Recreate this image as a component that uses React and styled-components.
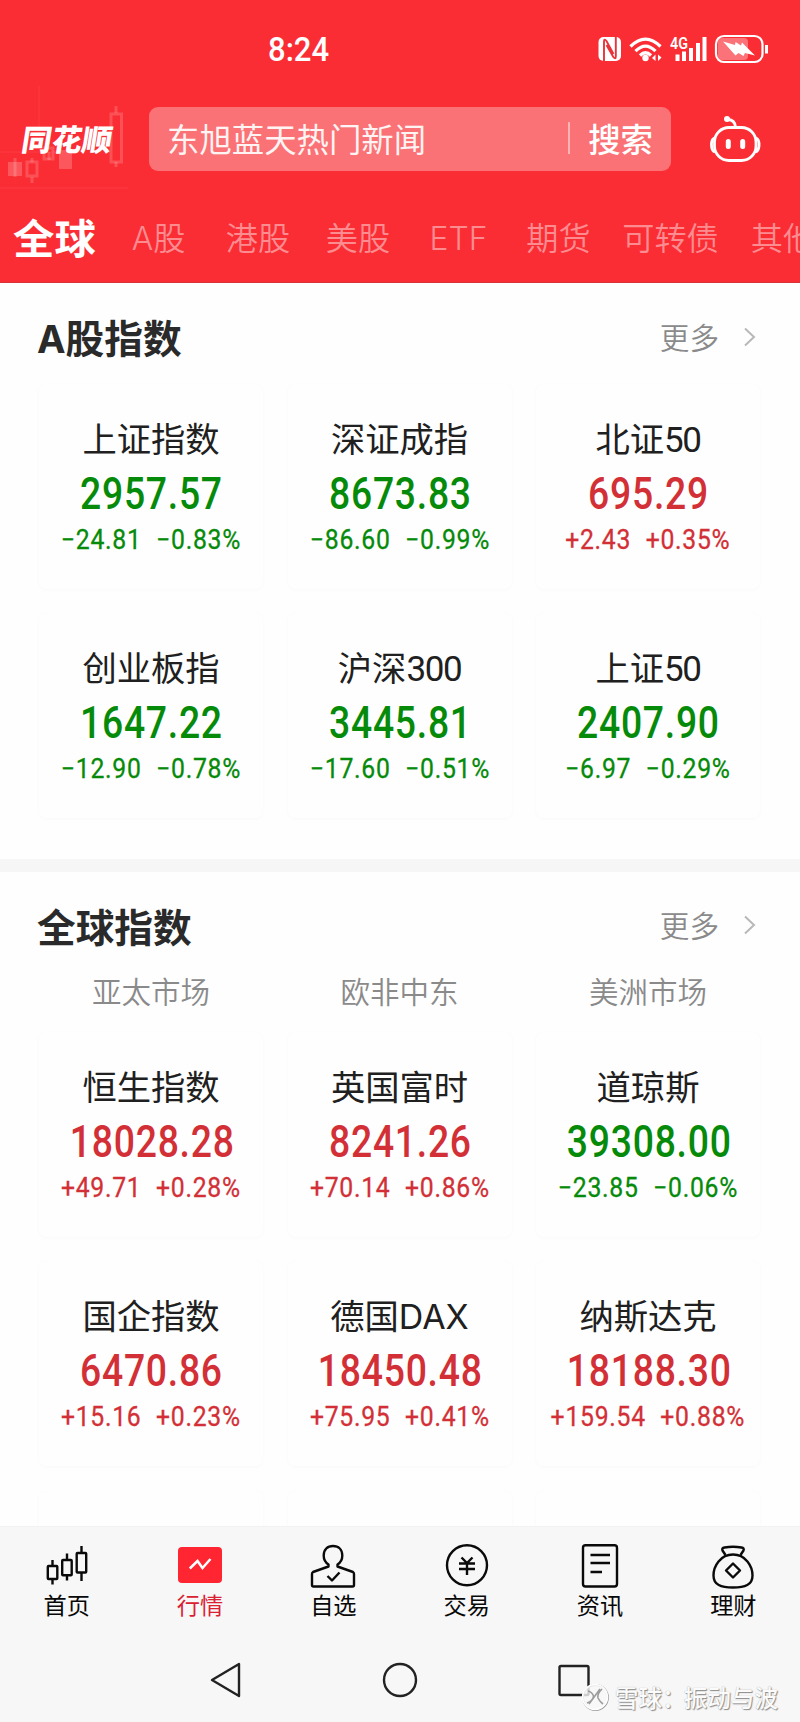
import { styled, css, createGlobalStyle } from "styled-components"

const GlobalStyle = createGlobalStyle`
  * {
    box-sizing: border-box;
  }
  body {
    margin: 0;
    background: #fdfdfd;
    font-family: "Noto Sans CJK SC", sans-serif;
  }
  svg {
    display: block;
    flex: none;
  }
`

const Screen = styled.div`
  position: relative;
  display: flex;
  flex-direction: column;
  width: 800px;
  height: 1722px;
  overflow: hidden;
  background: #fefefe;
`

const center = css`
  display: flex;
  align-items: center;
`

/* header */

const Header = styled.header`
  position: relative;
  flex: none;
  height: 283px;
  background: #fb2d34;
  border-bottom: 1px solid #d9343b;
  color: #fff;
`

const ChartDecor = styled.svg`
  position: absolute;
  left: 0;
  top: 84px;
`

const StatusBar = styled.div`
  ${center}
  height: 98px;
  padding: 0 31px 0 268px;
  justify-content: space-between;
`

const Clock = styled.span`
  display: inline-block;
  font: 500 33px/1 Roboto, sans-serif;
  transform: scaleX(0.94);
  transform-origin: left;
`

const StatusIcons = styled.div`
  ${center}
  height: 30px;
`

const SearchRow = styled.div`
  ${center}
  height: 82px;
  padding: 0 39px 0 22px;
`

const Logo = styled.div`
  width: 127px;
  padding-bottom: 3px;
  font-size: 30px;
  line-height: 1;
  font-weight: 900;
  white-space: nowrap;
  transform: skewX(-9deg);
  letter-spacing: 0.2px;
`

const SearchBox = styled.div`
  ${center}
  width: 522px;
  height: 64px;
  padding: 0 18px 2px;
  border-radius: 9px;
  background: #fa7275;
  font-size: 32.4px;
  line-height: 1;
`

const SearchHint = styled.span`
  flex: 1;
  color: #fff3f3;
`

const SearchButton = styled.span`
  padding-left: 20px;
  font-weight: 500;
  background: linear-gradient(#fbb3b5, #fbb3b5) left center / 2px 32px no-repeat;
`

const Robot = styled.svg`
  margin-left: auto;
`

const Tabs = styled.nav`
  display: flex;
  height: 102px;
  margin-top: 5px;
  overflow: hidden;
`

const Tab = styled.span`
  flex: none;
  width: ${(p) => p.$width}px;
  height: 102px;
  text-align: center;
  font-size: 32.2px;
  line-height: 102px;
  font-weight: 350;
  color: #fc8c90;
  ${(p) =>
    p.$active &&
    css`
      font-size: 41.4px;
      font-weight: 700;
      color: #fff;
    `}
`

/* index sections */

const Content = styled.main`
  flex: 1;
  min-height: 0;
  overflow: hidden;
`

const Section = styled.section`
  height: ${(p) => p.$height}px;
  padding: 0 38px 0 39px;
  border-bottom: 13px solid #f6f6f6;
`

const SectionHead = styled.div`
  ${center}
  justify-content: space-between;
  height: ${(p) => p.$height}px;
  padding: 6px 4px 0 0;
`

const Title = styled.h2`
  margin: 2px 0 0 -2px;
  font-size: 38.7px;
  line-height: 1;
  font-weight: 700;
  color: #2a2a2a;
`

const More = styled.span`
  ${center}
  gap: 23px;
  font-size: 29.6px;
  line-height: 1;
  font-weight: 350;
  color: #8a8a8a;
`

const Markets = styled.div`
  display: grid;
  grid-template-columns: repeat(3, 224px);
  column-gap: 24.5px;
  height: 61px;
  padding-bottom: 22px;
  align-items: center;
  text-align: center;
  font-size: 29.5px;
  line-height: 1;
  font-weight: 350;
  color: #8a8a8a;
`

const Grid = styled.div`
  display: grid;
  grid-template-columns: repeat(3, 224px);
  grid-auto-rows: 205px;
  gap: 24.4px 24.5px;
`

const Card = styled.div`
  display: flex;
  flex-direction: column;
  align-items: center;
  padding-top: 33px;
  border-radius: 8px;
  background: #fefefe;
  box-shadow: 0 1px 5px rgba(0, 0, 0, 0.022);
  color: ${(p) => (p.$up ? "#d23036" : "#068a0a")};
  white-space: pre;
`

const Name = styled.div`
  height: 43px;
  font-size: 34.3px;
  line-height: 41px;
  color: #202020;
`

const Digits = styled.span`
  font-family: Roboto, sans-serif;
  font-size: 35px;
  letter-spacing: -1.4px;
`

const Letters = styled.span`
  font-family: Inter, sans-serif;
  font-size: 0.99em;
`

const Value = styled.div`
  height: 66px;
  padding-left: 2px;
  font: 500 43.6px/69px Roboto, sans-serif;
  letter-spacing: 0.9px;
  transform: scaleX(0.855);
`

const Change = styled.div`
  display: flex;
  gap: 16px;
  height: 28px;
  font: 400 27.2px/28px Roboto, sans-serif;
  letter-spacing: 0.8px;
  -webkit-text-stroke: 0.3px currentColor;
  transform: scaleX(0.91);
`

/* bottom bars */

const Footer = styled.footer`
  flex: none;
  height: 196px;
  background: #f7f7f7;
  border-top: 1px solid #f2f2f2;
`

const NavBar = styled.nav`
  display: grid;
  grid-template-columns: repeat(6, 1fr);
  height: 104px;
`

const NavItem = styled.div`
  display: flex;
  flex-direction: column;
  align-items: center;
  padding-top: 17px;
  font-size: 23.2px;
  line-height: 24px;
  color: ${(p) => (p.$active ? "#da2033" : "#080808")};
`

const SystemBar = styled.div`
  ${center}
  justify-content: center;
  gap: 138px;
  height: 97px;
`

const Watermark = styled.div`
  ${center}
  position: absolute;
  right: 22px;
  bottom: 10px;
  gap: 6px;
  height: 30px;
  font-size: 23.6px;
  line-height: 30px;
  font-weight: 500;
  color: #fbfbfb;
  text-shadow: 1px 1px 1px #8b8b8b, 0 0 1px #a5a5a5;
`

const WatermarkName = styled.span`
  margin-left: -8px;
`

const tabs = [
  ["全球", 109],
  ["A股", 99],
  ["港股", 100],
  ["美股", 100],
  ["ETF", 101],
  ["期货", 99],
  ["可转债", 125],
  ["其他", 100],
]

const aShares = [
  ["上证指数", "2957.57", "−24.81", "−0.83%"],
  ["深证成指", "8673.83", "−86.60", "−0.99%"],
  ["北证50", "695.29", "+2.43", "+0.35%"],
  ["创业板指", "1647.22", "−12.90", "−0.78%"],
  ["沪深300", "3445.81", "−17.60", "−0.51%"],
  ["上证50", "2407.90", "−6.97", "−0.29%"],
]

const globalIndexes = [
  ["恒生指数", "18028.28", "+49.71", "+0.28%"],
  ["英国富时", "8241.26", "+70.14", "+0.86%"],
  ["道琼斯", "39308.00", "−23.85", "−0.06%"],
  ["国企指数", "6470.86", "+15.16", "+0.23%"],
  ["德国DAX", "18450.48", "+75.95", "+0.41%"],
  ["纳斯达克", "18188.30", "+159.54", "+0.88%"],
]

// latin letters and digits inside chinese labels get their own faces
const mixed = (text) =>
  text.split(/(\d+|[A-Z]+)/).map((part, i) => {
    if (i % 2 === 0) return part
    return /\d/.test(part) ? <Digits key={i}>{part}</Digits> : <Letters key={i}>{part}</Letters>
  })

const IndexCard = ({ item: [name, value, change, percent] }) => (
  <Card $up={change.startsWith("+")}>
    <Name>{mixed(name)}</Name>
    <Value>{value}</Value>
    <Change>
      <span>{change}</span>
      <span>{percent}</span>
    </Change>
  </Card>
)

const MoreLink = () => (
  <More>
    更多
    <svg width="16" height="22" viewBox="0 0 16 22" fill="none" stroke="#b8b8b8" strokeWidth="2">
      <path d="M3 2.500L12 11L3 19.500" />
    </svg>
  </More>
)

const StatusGlyphs = () => (
  <svg width="172" height="32" viewBox="597 33 172 32" fill="none" stroke="#fff">
    <rect x="598.500" y="37" width="22.500" height="24" rx="5" fill="#fff" stroke="none" />
    <path d="M604 61V41.500Q604 38 606.500 41L613.500 54M615.800 37V56.500Q615.800 60 613.300 57L606.500 45" stroke="#e8333a" strokeWidth="1.900" />
    <g strokeWidth="3.200">
      <path d="M630.500 46.500Q645.500 31.500 660.500 46.500" />
      <path d="M635.500 51.200Q645.500 41 655.500 51.200" />
      <path d="M640 55.500Q645.500 50 651 55.500" />
    </g>
    <circle cx="645.500" cy="58" r="3.200" fill="#fff" stroke="none" />
    <path d="M655.500 54.500V61L652 58ZM658 61V54.500L661.500 57.500Z" fill="#fff" stroke="none" />
    <path
      d="M677.500 61V54.500M684 61V51.500M691 61V48M698 61V43M704.500 61V37"
      strokeWidth="4"
    />
    <text x="670" y="49" fill="#fff" stroke="none" fontFamily="Roboto" fontSize="16.500" fontWeight="600" textLength="18" lengthAdjust="spacingAndGlyphs">
      4G
    </text>
    <rect x="718" y="38" width="30" height="22" rx="4" fill="#fb7378" stroke="none" />
    <rect x="716" y="36" width="46.500" height="26" rx="8" strokeWidth="2.200" />
    <path d="M723 41.500L735 45L735.500 42L741 45.500L742 42.500L755 55.500L745 53L743.500 56L738.500 53L735.500 55.500Z" fill="#fff" stroke="none" />
    <path d="M766.500 45V53.500" strokeWidth="3" />
  </svg>
)

const RobotIcon = () => (
  <Robot width="52" height="48" viewBox="709 114 52 48" fill="none" stroke="#fff" strokeWidth="2.800">
    <rect x="714.500" y="126.500" width="41.500" height="33" rx="14.500" />
    <path d="M714.500 137Q711 138.500 711.500 145Q712 150 715 151M756 137Q759.500 138.500 759 145Q758.500 150 755.500 151" />
    <path d="M735.500 126Q735 119 728 118.500" />
    <circle cx="727" cy="118" r="3" fill="#fff" stroke="none" />
    <path d="M728.300 140.500V145.500M742.700 140.500V145.500" strokeWidth="5" strokeLinecap="round" />
  </Robot>
)

const navProps = { width: 48, height: 48, viewBox: "0 0 48 48", fill: "none", stroke: "#0a0a0a", strokeWidth: 2.4 }

const HomeIcon = () => (
  <svg {...navProps}>
    <path d="M9.500 16V21.500M9.500 35.500V40.500M24 9.500V15.500M24 31.500V36.500M38.500 2V8.500M38.500 28.500V37" />
    <rect x="4.800" y="22" width="9.500" height="13" rx="0.800" />
    <rect x="19.200" y="16" width="9.500" height="15.200" rx="0.800" />
    <rect x="33.700" y="9" width="9.500" height="19.500" rx="0.800" />
  </svg>
)

const QuotesIcon = () => (
  <svg {...navProps}>
    <rect x="2" y="3" width="44" height="36" rx="4" fill="#ff2531" stroke="none" />
    <path d="M13.800 24.500L21.500 17L26.500 24L34.500 15" stroke="#fff" strokeWidth="2.500" />
  </svg>
)

const WatchlistIcon = () => (
  <svg {...navProps} strokeLinejoin="round">
    <path d="M19.500 22.500V20.500C15.500 18 14.700 15 14.700 11.500C14.700 5.500 18.500 2 24 2S33.300 5.500 33.300 11.500C33.300 15 32.500 18 28.500 20.500V22.500L44 28Q45 28.500 45 30V41Q45 42.500 43.500 42.500H4.500Q3 42.500 3 41V30Q3 28.500 4 28Z" />
    <path d="M18.500 32L23 36.500L30.500 28.500" />
  </svg>
)

const TradeIcon = () => (
  <svg {...navProps}>
    <circle cx="24" cy="21.300" r="20" />
    <path d="M18.500 13.500L24 19L29.500 13.500M24 19V31M16 19.500H32M16 25H32" />
  </svg>
)

const NewsIcon = () => (
  <svg {...navProps}>
    <rect x="7" y="1.200" width="34" height="41.300" rx="2.500" />
    <path d="M14.500 11H34M14.500 19H34M14.500 28H26" />
  </svg>
)

const WealthIcon = () => (
  <svg {...navProps} strokeLinejoin="round">
    <path d="M16.500 11L13.500 6.500Q12.500 4 15.500 3.500Q24 2 32.500 3.500Q35.500 4 34.500 6.500L31.500 11" />
    <path d="M24 10.500C11.500 10.500 4.500 22 4.500 31.500C4.500 41 12 43.500 24 43.500S43.500 41 43.500 31.500C43.500 22 36.500 10.500 24 10.500Z" />
    <path d="M24 19.500L31 26.500L24 33.500L17 26.500Z" />
  </svg>
)

const navItems = [
  ["首页", HomeIcon],
  ["行情", QuotesIcon],
  ["自选", WatchlistIcon],
  ["交易", TradeIcon],
  ["资讯", NewsIcon],
  ["理财", WealthIcon],
]

export default function App() {
  return (
    <Screen>
      <GlobalStyle />
      <Header>
        <ChartDecor width="130" height="106" viewBox="0 84 130 106" fill="none" stroke="#fff">
          <path d="M0 188H128M0 152H60M39 86V135" strokeOpacity="0.07" />
          <path d="M15 158V177M32 158V162M32 177V183M49 152V160M116 106V113M116 162V167" strokeOpacity="0.17" strokeWidth="3" />
          <path d="M8 162H22V176H8ZM59 150H72V169H59Z" fill="#fff" fillOpacity="0.2" stroke="none" />
          <path d="M27 162H37V176H27ZM44 148H53V159H44ZM111 114H121.500V162H111Z" strokeOpacity="0.17" strokeWidth="3" />
        </ChartDecor>
        <StatusBar>
          <Clock>8:24</Clock>
          <StatusIcons>
            <StatusGlyphs />
          </StatusIcons>
        </StatusBar>
        <SearchRow>
          <Logo>同花顺</Logo>
          <SearchBox>
            <SearchHint>东旭蓝天热门新闻</SearchHint>
            <SearchButton>搜索</SearchButton>
          </SearchBox>
          <RobotIcon />
        </SearchRow>
        <Tabs>
          {tabs.map(([label, width], i) => (
            <Tab key={label} $width={width} $active={i === 0}>
              {mixed(label)}
            </Tab>
          ))}
        </Tabs>
      </Header>

      <Content>
        <Section $height={589}>
          <SectionHead $height={101}>
            <Title>{mixed("A股指数")}</Title>
            <MoreLink />
          </SectionHead>
          <Grid>
            {aShares.map((item) => (
              <IndexCard key={item[0]} item={item} />
            ))}
          </Grid>
        </Section>
        <Section $height={700}>
          <SectionHead $height={99}>
            <Title>全球指数</Title>
            <MoreLink />
          </SectionHead>
          <Markets>
            <span>亚太市场</span>
            <span>欧非中东</span>
            <span>美洲市场</span>
          </Markets>
          <Grid>
            {globalIndexes.map((item) => (
              <IndexCard key={item[0]} item={item} />
            ))}
            <Card />
            <Card />
            <Card />
          </Grid>
        </Section>
      </Content>

      <Footer>
        <NavBar>
          {navItems.map(([label, Icon], i) => (
            <NavItem key={label} $active={i === 1}>
              <Icon />
              {label}
            </NavItem>
          ))}
        </NavBar>
        <SystemBar>
          <svg width="36" height="36" viewBox="0 0 36 36" fill="none" stroke="#222" strokeWidth="2.400" strokeLinejoin="round">
            <path d="M31 2V34L4 18Z" />
          </svg>
          <svg width="36" height="36" viewBox="0 0 36 36" fill="none" stroke="#222" strokeWidth="2.400">
            <circle cx="18" cy="18" r="16" />
          </svg>
          <svg width="36" height="36" viewBox="0 0 36 36" fill="none" stroke="#222" strokeWidth="2.400">
            <rect x="3.500" y="4" width="29" height="29" rx="1.500" />
          </svg>
        </SystemBar>
      </Footer>

      <Watermark>
        <svg width="28" height="28" viewBox="0 0 28 28" fill="none">
          <circle cx="14.500" cy="14.500" r="12.500" stroke="#999" strokeWidth="1.800" />
          <circle cx="14" cy="14" r="12.500" fill="#f7f7f7" fillOpacity="0.8" stroke="#fff" strokeWidth="1.500" />
          <path d="M7 8Q11 9 12.500 13Q12 18 6 20M21 6Q16 11 17 15Q19 19 22 21M19 6L8 21" stroke="#9c9c9c" strokeWidth="1.600" />
        </svg>
        <span>雪球：</span>
        <WatermarkName>振动与波</WatermarkName>
      </Watermark>
    </Screen>
  )
}
